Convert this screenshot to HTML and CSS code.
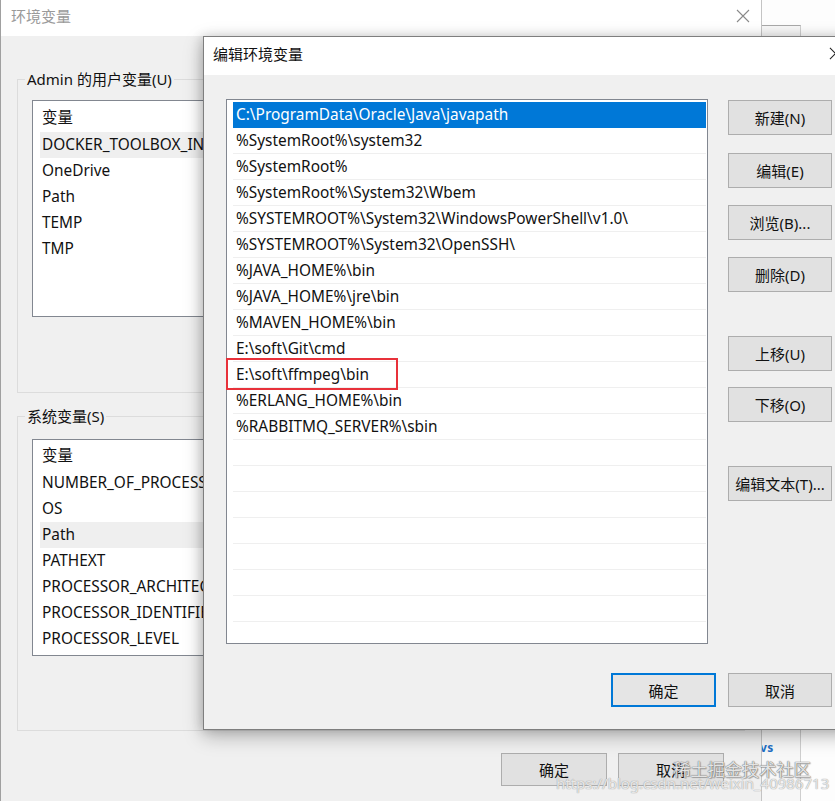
FILE: index.html
```html
<!DOCTYPE html>
<html lang="zh-CN">
<head>
<meta charset="utf-8">
<title>编辑环境变量</title>
<link rel="stylesheet" href="styles.css">
</head>
<body>
<div class="desk">
  <div class="bg-win"><span class="bg-link">vs</span></div>

  <div class="win win-back">
    <div class="titlebar back-title">
      <span class="title-text inactive">环境变量</span>
      <svg class="close" width="14" height="14" viewBox="0 0 14 14"><path d="M1 1L13 13M13 1L1 13" stroke="#8a8a8a" stroke-width="1.1" fill="none"/></svg>
    </div>
    <div class="back-body">
      <fieldset class="group group-user">
        <legend>Admin 的用户变量(U)</legend>
        <div class="vlist">
          <div class="vrow head">变量</div>
          <div class="vrow hover">DOCKER_TOOLBOX_INSTALL_PATH</div>
          <div class="vrow">OneDrive</div>
          <div class="vrow">Path</div>
          <div class="vrow">TEMP</div>
          <div class="vrow">TMP</div>
        </div>
      </fieldset>
      <fieldset class="group group-sys">
        <legend>系统变量(S)</legend>
        <div class="vlist">
          <div class="vrow head">变量</div>
          <div class="vrow">NUMBER_OF_PROCESSORS</div>
          <div class="vrow">OS</div>
          <div class="vrow hover">Path</div>
          <div class="vrow">PATHEXT</div>
          <div class="vrow">PROCESSOR_ARCHITECTURE</div>
          <div class="vrow">PROCESSOR_IDENTIFIER</div>
          <div class="vrow">PROCESSOR_LEVEL</div>
        </div>
      </fieldset>
      <div class="back-footer">
        <button class="btn back-btn">确定</button>
        <button class="btn back-btn">取消</button>
      </div>
    </div>
  </div>

  <div class="win win-front">
    <div class="titlebar front-title">
      <span class="title-text">编辑环境变量</span>
      <svg class="close front-close" width="14" height="14" viewBox="0 0 14 14"><path d="M1 1L13 13M13 1L1 13" stroke="#222" stroke-width="1.1" fill="none"/></svg>
    </div>
    <div class="front-body">
      <div class="front-main">
        <div class="list-wrap">
          <div class="plist">
            <div class="prow selected">C:\ProgramData\Oracle\Java\javapath</div>
            <div class="prow">%SystemRoot%\system32</div>
            <div class="prow">%SystemRoot%</div>
            <div class="prow">%SystemRoot%\System32\Wbem</div>
            <div class="prow">%SYSTEMROOT%\System32\WindowsPowerShell\v1.0\</div>
            <div class="prow">%SYSTEMROOT%\System32\OpenSSH\</div>
            <div class="prow">%JAVA_HOME%\bin</div>
            <div class="prow">%JAVA_HOME%\jre\bin</div>
            <div class="prow">%MAVEN_HOME%\bin</div>
            <div class="prow">E:\soft\Git\cmd</div>
            <div class="prow">E:\soft\ffmpeg\bin</div>
            <div class="prow">%ERLANG_HOME%\bin</div>
            <div class="prow">%RABBITMQ_SERVER%\sbin</div>
            <div class="prow"></div>
            <div class="prow"></div>
            <div class="prow"></div>
            <div class="prow"></div>
            <div class="prow"></div>
            <div class="prow"></div>
            <div class="prow"></div>
            <div class="prow"></div>
            <div class="prow"></div>
          </div>
          <div class="mark"></div>
        </div>
        <div class="side">
          <button class="btn side-btn">新建(N)</button>
          <button class="btn side-btn">编辑(E)</button>
          <button class="btn side-btn">浏览(B)...</button>
          <button class="btn side-btn">删除(D)</button>
          <button class="btn side-btn gap-lg">上移(U)</button>
          <button class="btn side-btn">下移(O)</button>
          <button class="btn side-btn gap-lg2">编辑文本(T)...</button>
        </div>
      </div>
      <div class="front-footer">
        <button class="btn foot-btn focused">确定</button>
        <button class="btn foot-btn">取消</button>
      </div>
    </div>
  </div>

  <div class="wm wm-title">稀土掘金技术社区</div>
  <div class="wm wm-url">https://blog.csdn.net/weixin_40986713</div>
</div>
</body>
</html>
```

FILE: styles.css
```css
* { box-sizing: border-box; }
html, body { margin: 0; padding: 0; }
body {
  background: #ffffff;
  font-family: "Noto Sans", "Noto Sans CJK SC", sans-serif;
  font-size: 15.4px;
  color: #111;
}
.desk {
  position: relative;
  width: 835px;
  height: 801px;
  overflow: hidden;
  background: #fdfdfd;
}
.bg-win {
  position: absolute;
  left: 761px;
  top: 25px;
  width: 40px;
  height: 790px;
  border-top: 1px solid #a8a8a8;
  border-right: 1px solid #cfcfcf;
  background: #f7f7f7;
  display: flex;
  align-items: flex-start;
  padding-top: 713px;
}
.bg-link {
  margin-left: -1px;
  color: #1f6fc5;
  font-size: 12px;
  font-weight: bold;
  letter-spacing: 0.5px;
}
.win { position: absolute; }
.win-back {
  left: 0;
  top: 0;
  width: 762px;
  height: 801px;
  background: #f0f0f0;
  border-left: 1px solid #a0a0a0;
  border-right: 1px solid #c4c4c4;
  display: flex;
  flex-direction: column;
}
.titlebar {
  display: flex;
  align-items: center;
  background: #ffffff;
  flex: none;
}
.back-title {
  height: 36px;
  padding-left: 10px;
  padding-right: 11px;
  padding-bottom: 5px;
}
.title-text { font-size: 15px; }
.title-text.inactive { color: #9a9a9a; }
.close { margin-left: auto; display: block; }
.back-body {
  flex: 1;
  padding: 33px 0 0 16px;
  display: flex;
  flex-direction: column;
}
.group {
  margin: 0;
  width: 728px;
  border: 1px solid #dcdcdc;
  padding: 11px 0 0 7px;
}
.group legend {
  padding: 0 2px;
  margin-left: 0;
  line-height: 20px;
  font-size: 15px;
}
.group-user { padding-bottom: 75px; }
.group-sys { margin-top: 13px; padding-top: 13px; padding-bottom: 74px; }
.vlist {
  margin-left: 7px;
  margin-right: 20px;
  background: #fff;
  border: 1px solid #828790;
  padding: 3px 0 0 7px;
}
.group-user .vlist { height: 217px; }
.group-sys .vlist { height: 217px; padding-top: 2px; }
.vrow {
  height: 26px;
  line-height: 26px;
  padding-left: 2px;
  white-space: nowrap;
}
.vrow.head { height: 28px; line-height: 27px; }
.vrow.hover { background: #efefef; }
.back-footer {
  display: flex;
  justify-content: flex-end;
  gap: 11px;
  padding-right: 37px;
  margin-top: 22px;
}
.btn {
  font-family: "Noto Sans", "Noto Sans CJK SC", sans-serif;
  font-size: 15px;
  color: #111;
  background: #e1e1e1;
  border: 1px solid #adadad;
  border-radius: 0;
  padding: 0;
  margin: 0;
}
.back-btn { width: 106px; height: 33px; }

.win-front {
  left: 203px;
  top: 36px;
  width: 652px;
  height: 694px;
  background: #f0f0f0;
  border: 1px solid #7e7e7e;
  box-shadow: 0 6px 18px rgba(0, 0, 0, 0.28), -2px 0 10px rgba(0, 0, 0, 0.12);
  display: flex;
  flex-direction: column;
}
.front-title {
  height: 38px;
  padding-left: 9px;
  padding-right: 12px;
  padding-bottom: 6px;
}
.front-close { width: 13px; height: 13px; }
.front-body {
  flex: 1;
  padding: 24px 22px 0 22px;
  display: flex;
  flex-direction: column;
}
.front-main {
  display: flex;
  gap: 20px;
}
.list-wrap {
  position: relative;
  width: 482px;
  height: 545px;
  flex: none;
}
.plist {
  width: 100%;
  height: 100%;
  overflow: hidden;
  background: #fff;
  border: 1px solid #828790;
  padding: 2px 1px 0 6px;
}
.prow {
  height: 26px;
  line-height: 26px;
  padding-left: 3px;
  border-bottom: 1px solid #efefef;
  white-space: nowrap;
}
.prow.selected {
  background: #0078d7;
  color: #fff;
  border-bottom-color: #0078d7;
}
.mark {
  position: absolute;
  left: 0;
  top: 259px;
  width: 172px;
  height: 32px;
  border: 2px solid #e8313a;
}
.side {
  display: flex;
  flex-direction: column;
  padding-top: 1px;
}
.side-btn {
  width: 104px;
  height: 35px;
  margin-bottom: 17px;
}
.side-btn:first-child { margin-bottom: 18px; }
.side-btn.gap-lg { margin-top: 27px; margin-bottom: 16px; }
.side-btn.gap-lg2 { margin-top: 27px; }
.front-footer {
  display: flex;
  justify-content: flex-end;
  gap: 12px;
  margin-top: 29px;
}
.foot-btn { width: 105px; height: 34px; }
.foot-btn:last-child { width: 104px; }
.foot-btn.focused {
  border: 2px solid #0078d7;
  background: #e5e5e5;
}

.wm {
  position: absolute;
  white-space: nowrap;
  pointer-events: none;
}
.wm-title {
  left: 673px;
  top: 756px;
  font-size: 17.5px;
  letter-spacing: -0.3px;
  color: rgba(250, 250, 250, 0.85);
  text-shadow: 0 0 1px #6a6a6a, 0 0 1px #6a6a6a, 1px 1px 1px rgba(0,0,0,0.25);
}
.wm-url {
  left: 556px;
  top: 773px;
  font-size: 15px;
  color: rgba(255, 255, 255, 0.75);
  text-shadow: 0 0 1px #9a9a9a, 0 0 1px #b0b0b0;
}
```
